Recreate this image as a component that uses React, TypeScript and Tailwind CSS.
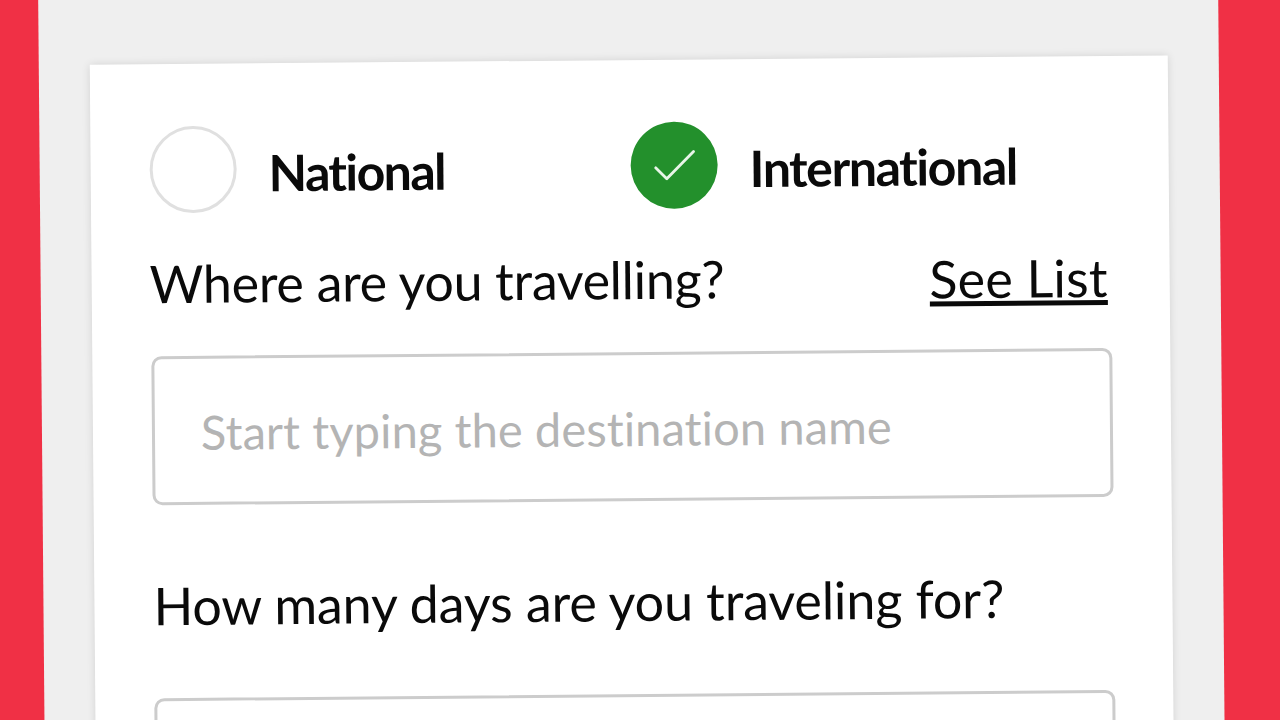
export default function App() {
  return (
    <div className="h-[720px] w-[1280px] overflow-hidden bg-[#f03045] font-['Lato',sans-serif] text-[#0a0a0a] [font-variant-ligatures:none]">
      <div className="h-[720px] rotate-[-0.5deg]">
        <div className="-mt-[40px] ml-[41px] h-[820px] w-[1180px] bg-[#efefef] px-[51px] pt-[100px]">
          <div className="h-[720px] bg-white pl-[59px] pr-[60px] pt-[62px] shadow-[0_0_8px_rgba(0,0,0,0.12)]">
            <div className="flex h-[87px] items-center">
              <div className="flex w-[481px] items-center gap-[32px]">
                <div className="h-[87px] w-[87px] rounded-full border-[3px] border-[#e0e0e0]" />
                <span className="mt-[8px] text-[50px] font-bold tracking-[-1.6px]">National</span>
              </div>
              <div className="flex items-center gap-[32px]">
                <div className="flex h-[87px] w-[87px] items-center justify-center rounded-full bg-[#23902c]">
                  <svg viewBox="0 0 42 31" className="h-[31px] w-[42px]" fill="none" stroke="#e8f5e8" strokeWidth="2.8" strokeLinecap="round" strokeLinejoin="round">
                    <path d="M2 18 L13 29 L40 2" />
                  </svg>
                </div>
                <span className="mt-[8px] text-[50px] font-bold tracking-[-1.4px]">International</span>
              </div>
            </div>
            <div className="mt-[40px] flex w-[957px] items-start justify-between text-[52px] leading-[60px]">
              <span className="-ml-[1px] tracking-[-0.3px]">Where are you travelling?</span>
              <a className="relative mt-[2px] tracking-[0.2px]">
                See List
                <span className="absolute bottom-[2px] left-0 right-0 h-[5px] bg-[#0a0a0a]" />
              </a>
            </div>
            <div className="mt-[41px] flex h-[149px] w-[961px] items-center rounded-[10px] border-[3px] border-[#cccccc] pl-[46px] pt-[4px] text-[47px] tracking-[0.12px] text-[#b4b4b4]">
              Start typing the destination name
            </div>
            <div className="mt-[70px] text-[52px] leading-[60px] tracking-[-0.08px]">How many days are you traveling for?</div>
            <div className="mt-[63px] h-[149px] w-[961px] rounded-[10px] border-[3px] border-[#cccccc]" />
          </div>
        </div>
      </div>
    </div>
  );
}
